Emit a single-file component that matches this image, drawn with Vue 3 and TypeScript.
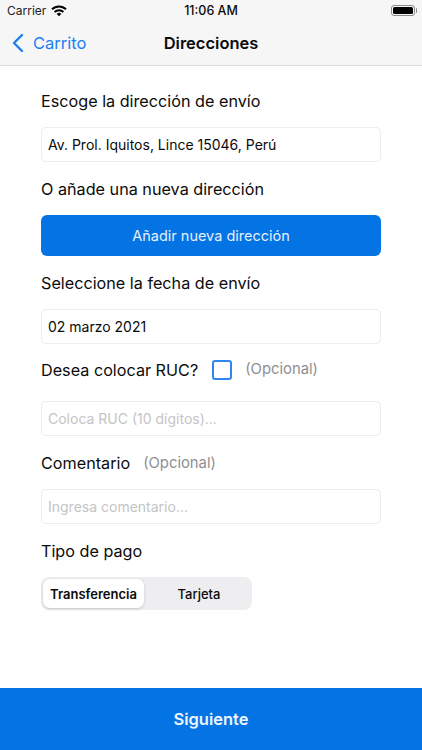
<script setup lang="ts">
const tabs = ['Transferencia', 'Tarjeta'];
</script>

<template>
  <div class="screen">
    <header class="head">
      <div class="status">
        <div class="st-left">
          <span>Carrier</span>
          <svg width="16" height="12" viewBox="0 0 16 12"><path d="M1 4.300a10 10 0 0 1 14 0" fill="none" stroke="#000" stroke-width="2"/><path d="M3.600 7a6.300 6.300 0 0 1 8.800 0" fill="none" stroke="#000" stroke-width="2"/><path d="M5.700 8.900a3.300 3.300 0 0 1 4.600 0L8 11.300z" fill="#000"/></svg>
        </div>
        <span class="time">11:06 AM</span>
        <div class="battery"><i></i></div>
      </div>
      <nav class="nav">
        <div class="back">
          <svg width="14" height="20" viewBox="0 0 14 20"><path d="M11 2 3 10l8 8" fill="none" stroke="#1a7ff0" stroke-width="2.400" stroke-linecap="round" stroke-linejoin="round"/></svg>
          <span>Carrito</span>
        </div>
        <span class="title">Direcciones</span>
      </nav>
    </header>

    <main class="body">
      <p class="label l1">Escoge la dirección de envío</p>
      <div class="field">Av. Prol. Iquitos, Lince 15046, Perú</div>
      <p class="label l2">O añade una nueva dirección</p>
      <button class="add">Añadir nueva dirección</button>
      <p class="label l3">Seleccione la fecha de envío</p>
      <div class="field">02 marzo 2021</div>
      <div class="row ruc">
        <span class="label">Desea colocar RUC?</span>
        <span class="check"></span>
        <span class="opt opt-a">(Opcional)</span>
      </div>
      <div class="field ph">Coloca RUC (10 dígitos)...</div>
      <div class="row com">
        <span class="label">Comentario</span>
        <span class="opt opt-b">(Opcional)</span>
      </div>
      <div class="field ph">Ingresa comentario...</div>
      <p class="label l4">Tipo de pago</p>
      <div class="seg">
        <span v-for="(t, i) in tabs" :key="t" class="tab" :class="{ on: i === 0 }">{{ t }}</span>
      </div>
    </main>

    <button class="next">Siguiente</button>
  </div>
</template>

<style scoped>
.screen {
  width: 422px;
  height: 750px;
  display: flex;
  flex-direction: column;
  background: #fff;
  font-family: Inter, "Liberation Sans", sans-serif;
  color: #0b0b0b;
  overflow: hidden;
}
.head {
  height: 66px;
  background: #f7f6f7;
  border-bottom: 1px solid #dcdcdc;
  box-sizing: border-box;
  flex: none;
}
.status {
  height: 21px;
  position: relative;
  display: flex;
  align-items: center;
  justify-content: space-between;
  padding: 0 7px;
  font-size: 12px;
}
.st-left {
  display: flex;
  align-items: center;
  gap: 5px;
  color: #222;
}
.time {
  position: absolute;
  left: 0;
  right: 0;
  text-align: center;
  font-weight: 500;
  font-size: 12.500px;
}
.battery {
  position: relative;
  width: 24px;
  height: 11px;
  border: 1px solid #8a8a8a;
  border-radius: 3px;
  padding: 1px;
  box-sizing: border-box;
}
.battery::after {
  content: "";
  position: absolute;
  right: -3px;
  top: 2px;
  width: 1.500px;
  height: 5px;
  background: #8a8a8a;
  border-radius: 0 1px 1px 0;
}
.battery i {
  display: block;
  height: 100%;
  background: #000;
  border-radius: 1.500px;
}
.nav {
  height: 44px;
  position: relative;
  display: flex;
  align-items: center;
  justify-content: center;
}
.back {
  position: absolute;
  left: 11px;
  display: flex;
  align-items: center;
  gap: 8px;
  color: #1a7ff0;
  font-size: 16.500px;
}
.title {
  font-size: 16.500px;
  font-weight: 600;
}
.body {
  flex: 1;
  padding: 0 41px;
  display: flex;
  flex-direction: column;
  align-items: stretch;
}
.label {
  margin: 0;
  font-size: 16.200px;
  line-height: 22px;
}
.l1 { margin-top: 24px; margin-bottom: 15px; }
.l2 { margin-top: 16px; margin-bottom: 15px; }
.l3 { margin-top: 16px; margin-bottom: 15px; }
.l4 { margin-top: 16px; margin-bottom: 15px; }
.field {
  height: 35px;
  box-sizing: border-box;
  border: 1px solid #ececec;
  border-radius: 5px;
  padding: 0 6px;
  display: flex;
  align-items: center;
  font-size: 14px;
}
.ph {
  color: #c4c4c6;
}
.add {
  height: 41px;
  border: 0;
  border-radius: 6px;
  background: #0473e3;
  color: #e4f0fd;
  font: inherit;
  font-size: 14.500px;
}
.row {
  display: flex;
  align-items: center;
}
.ruc { margin-top: 13px; margin-bottom: 18px; height: 26px; }
.com { margin-top: 16px; margin-bottom: 15px; }
.check {
  width: 20px;
  height: 20px;
  box-sizing: border-box;
  border: 2px solid #2f86ee;
  border-radius: 3px;
  margin-left: 14px;
}
.opt {
  font-size: 14.800px;
  color: #8e8e92;
}
.opt-a { margin-left: 13px; position: relative; top: -1px; }
.opt-b { margin-left: 13px; }
.seg {
  width: 211px;
  height: 33px;
  background: #eeeef0;
  border-radius: 8px;
  padding: 2px;
  box-sizing: border-box;
  display: flex;
}
.tab {
  flex: 1;
  display: flex;
  align-items: center;
  justify-content: center;
  font-size: 13px;
  font-weight: 500;
  padding-left: 4px;
}
.tab.on {
  flex: none;
  width: 101px;
  background: #fff;
  border-radius: 7px;
  box-shadow: 0 1px 3px rgba(0, 0, 0, 0.18);
  font-weight: 600;
  padding-left: 0;
}
.next {
  flex: none;
  height: 62px;
  border: 0;
  background: #0473e3;
  color: #edf5ff;
  font: inherit;
  font-size: 16.500px;
  font-weight: 600;
}
</style>
